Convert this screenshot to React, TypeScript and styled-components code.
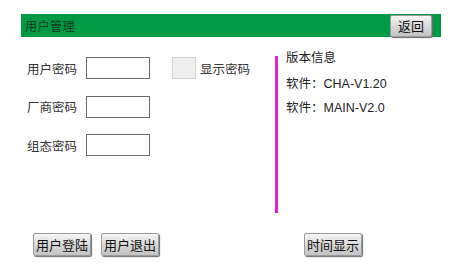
import React from "react";
import styled, { createGlobalStyle } from "styled-components";

const Global = createGlobalStyle`
  html, body { margin: 0; padding: 0; background: #ffffff; }
  body { font-family: "Liberation Sans", "Noto Sans CJK SC", sans-serif; }
`;

const Page = styled.div`
  width: 470px;
  height: 273px;
  box-sizing: border-box;
  padding: 14px 29px 0 21px;
  background: #fff;
  overflow: hidden;
`;

const Header = styled.div`
  height: 23px;
  background: #009a44;
  display: flex;
  align-items: center;
  justify-content: space-between;
  padding: 0 9px 0 4px;
`;

const Title = styled.span`
  font-size: 12px;
  color: #10361c;
  letter-spacing: 0.5px;
`;

const Button = styled.button<{ $w?: number; $h?: number }>`
  width: ${(p) => p.$w ?? 58}px;
  height: ${(p) => p.$h ?? 23}px;
  padding: 0;
  border: 1px solid #9a9a9a;
  border-radius: 2px;
  background: linear-gradient(#f6f6f6, #d4d4d4 60%, #c4c4c4);
  box-shadow: 1px 1px 1px #6a6a6a;
  font-family: "Liberation Sans", "Noto Sans CJK SC", sans-serif;
  font-size: 13px;
  color: #111;
  display: flex;
  align-items: center;
  justify-content: center;
`;

const Main = styled.div`
  display: flex;
  margin-top: 10px;
  padding-left: 6px;
`;

const FormCol = styled.div`
  width: 248px;
  padding-top: 10px;
  display: flex;
  flex-direction: column;
  gap: 16.5px;
`;

const Row = styled.div`
  display: flex;
  align-items: center;
  height: 22px;
`;

const Label = styled.span`
  width: 59px;
  font-size: 12.5px;
  color: #333;
`;

const Input = styled.div`
  width: 64px;
  height: 22px;
  box-sizing: border-box;
  border: 1px solid #6a6a6a;
  background: #fff;
`;

const Check = styled.div`
  width: 24px;
  height: 22px;
  box-sizing: border-box;
  margin-left: 22px;
  border: 1px solid #d0d0d0;
  background: #efefef;
`;

const CheckLabel = styled.span`
  margin-left: 4px;
  font-size: 12.5px;
  color: #333;
`;

const Divider = styled.div`
  width: 3px;
  height: 157px;
  margin-top: 9px;
  background: #e020d8;
`;

const InfoCol = styled.div`
  padding-left: 8px;
  display: flex;
  flex-direction: column;
`;

const InfoLine = styled.div<{ $mt: number }>`
  margin-top: ${(p) => p.$mt}px;
  font-size: 12.5px;
  line-height: 18px;
  color: #222;
`;

const Footer = styled.div`
  display: flex;
  margin-top: 20px;
  padding-left: 12px;
  gap: 10px;
`;

const Spacer = styled.div`
  width: 125px;
`;

export default function App() {
  return (
    <>
      <Global />
      <Page>
        <Header>
          <Title>用户管理</Title>
          <Button $w={42} $h={22}>返回</Button>
        </Header>
        <Main>
          <FormCol>
            <Row>
              <Label>用户密码</Label>
              <Input />
              <Check />
              <CheckLabel>显示密码</CheckLabel>
            </Row>
            <Row>
              <Label>厂商密码</Label>
              <Input />
            </Row>
            <Row>
              <Label>组态密码</Label>
              <Input />
            </Row>
          </FormCol>
          <Divider />
          <InfoCol>
            <InfoLine $mt={2}>版本信息</InfoLine>
            <InfoLine $mt={8}>软件：CHA-V1.20</InfoLine>
            <InfoLine $mt={6}>软件：MAIN-V2.0</InfoLine>
          </InfoCol>
        </Main>
        <Footer>
          <Button>用户登陆</Button>
          <Button>用户退出</Button>
          <Spacer />
          <Button>时间显示</Button>
        </Footer>
      </Page>
    </>
  );
}
